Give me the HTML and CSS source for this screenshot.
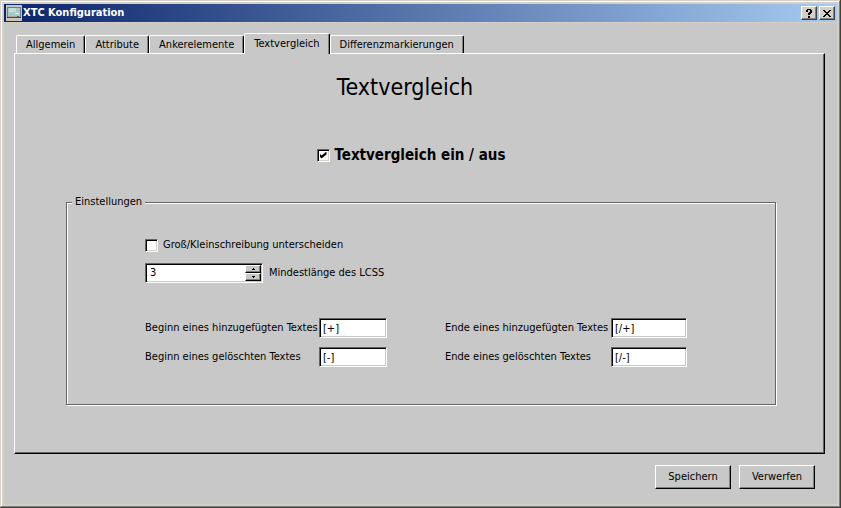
FILE: index.html
```
<!DOCTYPE html>
<html lang="de">
<head>
  <meta charset="UTF-8" />
  <meta name="viewport" content="width=device-width, initial-scale=1.0" />
  <title>XTC Konfiguration</title>
  <link rel="stylesheet" href="styles.css">
</head>
<body>

<form class="window">
  <header class="titlebar">
    <svg class="app-icon" width="16" height="16" viewBox="0 0 16 16" shape-rendering="crispEdges" aria-hidden="true">
      <rect width="16" height="16" fill="#c8c5be" />
      <rect x="1" y="2" width="14" height="11" fill="#77797a" />
      <rect x="2" y="3" width="12" height="8" fill="#a5c9c4" />
      <rect x="3" y="3" width="7" height="4" fill="#bedcd8" />
      <rect x="9" y="8" width="4" height="1" fill="#e4efed" />
      <rect x="4" y="6" width="3" height="1" fill="#d8e6dc" />
      <rect x="2" y="11" width="12" height="1" fill="#a9a8a3" />
      <rect x="1" y="12" width="14" height="1" fill="#44474a" />
      <rect x="11" y="11" width="2" height="1" fill="#5d6062" />
    </svg>
    <h1>XTC Konfiguration</h1>
    <button type="button" class="caption-button" aria-label="Hilfe">
      <svg width="6" height="9" viewBox="0 0 6 9" shape-rendering="crispEdges" aria-hidden="true">
        <path d="M1 0h4v1h1v3h-1v1h-1v1h-2v-2h1v-1h1v-2h-2v2h-2v-2h1zM2 7h2v2h-2z" />
      </svg>
    </button>
    <button type="button" class="caption-button" aria-label="Schließen">
      <svg width="8" height="7" viewBox="0 0 8 7" shape-rendering="crispEdges" aria-hidden="true">
        <path d="M0 0h2v1h1v1h2v-1h1v-1h2v1h-1v1h-1v1h-1v1h1v1h1v1h1v1h-2v-1h-1v-1h-2v1h-1v1h-2v-1h1v-1h1v-1h1v-1h-1v-1h-1v-1h-1z" />
      </svg>
    </button>
  </header>

  <main>
    <div class="tabs" role="tablist">
      <button type="button" class="tab" role="tab">Allgemein</button>
      <button type="button" class="tab" role="tab">Attribute</button>
      <button type="button" class="tab" role="tab">Ankerelemente</button>
      <button type="button" class="tab active" role="tab" aria-selected="true">Textvergleich</button>
      <button type="button" class="tab" role="tab">Differenzmarkierungen</button>
    </div>

    <section class="panel" role="tabpanel">
      <h2>Textvergleich</h2>
      <label class="check main-check">
        <input type="checkbox" checked />
        Textvergleich ein / aus
      </label>

      <fieldset>
        <legend>Einstellungen</legend>
        <label class="check">
          <input type="checkbox" />
          Groß/Kleinschreibung unterscheiden
        </label>
        <div class="lcss">
          <div class="spinner">
            <input type="text" id="lcss" value="3" inputmode="numeric" />
            <div class="spin-buttons">
              <button type="button" aria-label="Erhöhen">
                <svg width="3" height="2" viewBox="0 0 3 2" shape-rendering="crispEdges"><path d="M1 0h1v1h1v1h-3v-1h1z" /></svg>
              </button>
              <button type="button" aria-label="Verringern">
                <svg width="3" height="2" viewBox="0 0 3 2" shape-rendering="crispEdges"><path d="M0 0h3v1h-1v1h-1v-1h-1z" /></svg>
              </button>
            </div>
          </div>
          <label for="lcss">Mindestlänge des LCSS</label>
        </div>

        <div class="markers">
          <div class="marker-begin">
            <label for="add-begin">Beginn eines hinzugefügten Textes</label>
            <input type="text" id="add-begin" value="[+]" />
            <label for="del-begin">Beginn eines gelöschten Textes</label>
            <input type="text" id="del-begin" value="[-]" />
          </div>
          <div class="marker-end">
            <label for="add-end">Ende eines hinzugefügten Textes</label>
            <input type="text" id="add-end" value="[/+]" />
            <label for="del-end">Ende eines gelöschten Textes</label>
            <input type="text" id="del-end" value="[/-]" />
          </div>
        </div>
      </fieldset>
    </section>

    <div class="actions">
      <button type="button">Speichern</button>
      <button type="button">Verwerfen</button>
    </div>
  </main>
</form>

</body>
</html>
```
FILE: styles.css
```
* {
  box-sizing: border-box;
}
body {
  margin: 0;
  background: #d4d0c8;
  color: black;
  font: 11px/14px "DejaVu Sans Condensed", Tahoma, sans-serif;
}
button, input {
  font: inherit;
  color: inherit;
  padding: 0;
  margin: 0;
  border-radius: 0;
}
svg {
  display: block;
}

/* window frame */
.window {
  display: flex;
  flex-direction: column;
  min-height: 100vh;
  padding: 4px;
  background: #d4d0c8;
  box-shadow: inset -1px -1px #404040, inset 1px 1px #d4d0c8, inset -2px -2px #808080, inset 2px 2px white;
}
.titlebar {
  display: flex;
  align-items: center;
  height: 18px;
  padding: 0 2px;
  margin-bottom: 1px;
  background: linear-gradient(to right, #0a246a, #a6caf0);
}
.titlebar h1 {
  flex: 1;
  margin: 0 0 0 1px;
  font-size: 11px;
  line-height: 16px;
  font-weight: bold;
  color: white;
}
.caption-button {
  display: flex;
  align-items: center;
  justify-content: center;
  width: 16px;
  height: 14px;
  background: #d4d0c8;
  border: 1px solid;
  border-color: white #404040 #404040 white;
  box-shadow: inset -1px -1px #808080;
}
.caption-button + .caption-button {
  margin-left: 2px;
}
main {
  flex: 1;
  display: flex;
  flex-direction: column;
  padding: 10px 12px 15px 10px;
  background: #c8c8c8;
}

/* tabs */
.tabs {
  display: flex;
  align-items: flex-end;
  height: 20px;
  padding-left: 2px;
}
.tab {
  height: 18px;
  padding: 0 9px;
  background: #c8c8c8;
  border: solid;
  border-width: 1px 1px 0 1px;
  border-color: white black white white;
  border-radius: 2px 2px 0 0;
  box-shadow: inset -1px 0 #808080;
}
.tab.active {
  position: relative;
  height: 21px;
  margin-bottom: -1px;
}

/* page of the active tab */
.panel {
  flex: 1;
  display: flex;
  flex-direction: column;
  padding: 17px 48px 48px 51px;
  border: 1px solid;
  border-color: white black black white;
  box-shadow: inset -1px -1px #646464;
}
h2 {
  margin: 0 32px 42px 0;
  font-size: 23px;
  line-height: 32px;
  font-weight: normal;
  text-align: center;
}
.check {
  display: flex;
  align-items: center;
  gap: 5px;
  height: 16px;
}
.check input {
  appearance: none;
  width: 13px;
  height: 13px;
  background: white;
  border: 1px solid;
  border-color: #646464 white white #646464;
  box-shadow: inset 1px 1px black, inset -1px -1px #d4d0c8;
}
.check input:checked::before {
  content: "";
  display: block;
  width: 7px;
  height: 7px;
  margin: 2px;
  background: black;
  clip-path: polygon(0 29%, 29% 58%, 100% 0, 100% 43%, 29% 100%, 0 72%);
}
.main-check {
  align-self: center;
  height: 20px;
  margin-right: 20px;
  font-size: 15px;
  font-weight: bold;
  line-height: 20px;
}

fieldset {
  flex: 1;
  min-width: 0;
  margin: 30px 0 0;
  padding: 28px 78px 37px;
  border: 1px solid #646464;
  box-shadow: 1px 1px white, inset 1px 1px white;
}
legend {
  margin-left: -73px;
  padding: 0 3px;
  background: #c8c8c8;
}
.lcss {
  display: flex;
  align-items: center;
  gap: 6px;
  margin-top: 10px;
}
.spinner, .markers input {
  height: 20px;
  background: white;
  border: 1px solid;
  border-color: #646464 white white #646464;
  box-shadow: inset 1px 1px black, inset -1px -1px #c8c8c8;
}
.spinner {
  display: flex;
  width: 118px;
  padding: 1px;
}
.spinner input {
  flex: 1;
  min-width: 0;
  padding-left: 3px;
  border: none;
  background: none;
}
.spin-buttons {
  display: flex;
  flex-direction: column;
  width: 16px;
}
.spin-buttons button {
  flex: 1;
  display: flex;
  align-items: center;
  justify-content: center;
  background: #c8c8c8;
  border: 1px solid;
  border-color: white black black white;
  box-shadow: inset -1px -1px #808080;
}
.markers {
  display: flex;
  gap: 58px;
  margin-top: 35px;
}
.marker-begin, .marker-end {
  display: grid;
  grid-template-columns: 166px 68px;
  gap: 9px 8px;
  align-items: center;
  white-space: nowrap;
}
.marker-end {
  grid-template-columns: 158px 76px;
}
.markers input {
  min-width: 0;
  padding: 0 3px;
}

.actions {
  display: flex;
  justify-content: flex-end;
  gap: 8px;
  margin-top: 11px;
  padding-right: 10px;
}
.actions button {
  width: 76px;
  height: 24px;
  background: #c8c8c8;
  border: 1px solid;
  border-color: white black black white;
  box-shadow: inset -1px -1px #808080;
}
```
